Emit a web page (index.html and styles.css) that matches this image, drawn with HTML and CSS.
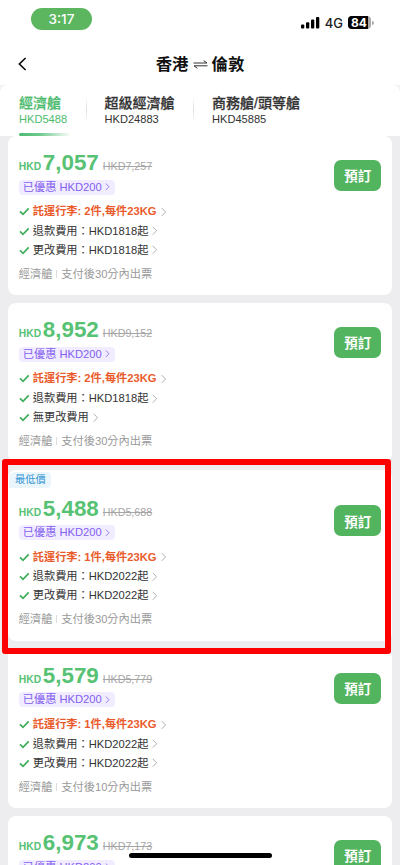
FILE: index.html
```html
<!DOCTYPE html>
<html lang="zh-Hant">
<head>
<meta charset="utf-8">
<title>香港 ⇌ 倫敦</title>
<link rel="stylesheet" href="styles.css">
</head>
<body>
<svg class="defs" width="0" height="0">
  <symbol id="check" viewBox="0 0 11 9"><path d="M1 4.4 4 7.4 9.7 1.4" fill="none" stroke="#3fae5a" stroke-width="1.7"/></symbol>
  <symbol id="chev" viewBox="0 0 6 10"><path d="M.8.7 5 5 .8 9.3" fill="none" stroke="currentColor" stroke-width="1"/></symbol>
</svg>
<div class="screen">
  <div class="status">
    <span class="clock">3:17</span>
    <div class="signals">
      <svg class="bars" width="19" height="12" viewBox="0 0 19 12"><rect x="0" y="7.6" width="3.3" height="4" rx="1"/><rect x="5" y="5.2" width="3.3" height="6.4" rx="1"/><rect x="10" y="2.6" width="3.3" height="9" rx="1"/><rect x="15" y="0" width="3.3" height="11.6" rx="1"/></svg>
      <span class="net">4G</span>
      <span class="battery"><span class="level">84</span></span><i class="cap"></i>
    </div>
  </div>
  <div class="nav">
    <svg class="back" width="9" height="14" viewBox="0 0 9 14"><path d="M7.6 1 1.4 7l6.2 6" fill="none" stroke="#111" stroke-width="1.7"/></svg>
    <h1 class="title"><span>香港</span><svg width="15" height="9" viewBox="0 0 15 9"><path d="M.5 3H14L10.6.6M14.5 5.8H1L4.4 8.3" fill="none" stroke="#333" stroke-width="1"/></svg><span>倫敦</span></h1>
  </div>
  <div class="tabwrap"><div class="tabs">
    <div class="tab tab-on"><b>經濟艙</b><span>HKD5488</span></div>
    <div class="tab tab-mid"><b>超級經濟艙</b><span>HKD24883</span></div>
    <div class="tab"><b>商務艙/頭等艙</b><span>HKD45885</span></div>
  </div></div>
  <main class="list">
    <section class="card">
      <div class="price"><small>HKD</small><strong>7,057</strong><s>HKD7,257</s></div>
      <div class="deal">已優惠 HKD200<svg><use href="#chev"/></svg></div>
      <div class="row bag"><svg class="ck"><use href="#check"/></svg>託運行李: 2件,每件23KG<svg class="cv"><use href="#chev"/></svg></div>
      <div class="row"><svg class="ck"><use href="#check"/></svg>退款費用：HKD1818起<svg class="cv"><use href="#chev"/></svg></div>
      <div class="row"><svg class="ck"><use href="#check"/></svg>更改費用：HKD1818起<svg class="cv"><use href="#chev"/></svg></div>
      <div class="foot">經濟艙<i></i>支付後30分內出票</div>
      <button class="book">預訂</button>
    </section>
    <section class="card">
      <div class="price"><small>HKD</small><strong>8,952</strong><s>HKD9,152</s></div>
      <div class="deal">已優惠 HKD200<svg><use href="#chev"/></svg></div>
      <div class="row bag"><svg class="ck"><use href="#check"/></svg>託運行李: 2件,每件23KG<svg class="cv"><use href="#chev"/></svg></div>
      <div class="row"><svg class="ck"><use href="#check"/></svg>退款費用：HKD1818起<svg class="cv"><use href="#chev"/></svg></div>
      <div class="row"><svg class="ck"><use href="#check"/></svg>無更改費用<svg class="cv"><use href="#chev"/></svg></div>
      <div class="foot">經濟艙<i></i>支付後30分內出票</div>
      <button class="book">預訂</button>
    </section>
    <section class="card lowest">
      <span class="flag">最低價</span>
      <div class="price"><small>HKD</small><strong>5,488</strong><s>HKD5,688</s></div>
      <div class="deal">已優惠 HKD200<svg><use href="#chev"/></svg></div>
      <div class="row bag"><svg class="ck"><use href="#check"/></svg>託運行李: 1件,每件23KG<svg class="cv"><use href="#chev"/></svg></div>
      <div class="row"><svg class="ck"><use href="#check"/></svg>退款費用：HKD2022起<svg class="cv"><use href="#chev"/></svg></div>
      <div class="row"><svg class="ck"><use href="#check"/></svg>更改費用：HKD2022起<svg class="cv"><use href="#chev"/></svg></div>
      <div class="foot">經濟艙<i></i>支付後30分內出票</div>
      <button class="book">預訂</button>
      <div class="marker"></div>
    </section>
    <section class="card">
      <div class="price"><small>HKD</small><strong>5,579</strong><s>HKD5,779</s></div>
      <div class="deal">已優惠 HKD200<svg><use href="#chev"/></svg></div>
      <div class="row bag"><svg class="ck"><use href="#check"/></svg>託運行李: 1件,每件23KG<svg class="cv"><use href="#chev"/></svg></div>
      <div class="row"><svg class="ck"><use href="#check"/></svg>退款費用：HKD2022起<svg class="cv"><use href="#chev"/></svg></div>
      <div class="row"><svg class="ck"><use href="#check"/></svg>更改費用：HKD2022起<svg class="cv"><use href="#chev"/></svg></div>
      <div class="foot">經濟艙<i></i>支付後10分內出票</div>
      <button class="book">預訂</button>
    </section>
    <section class="card">
      <div class="price"><small>HKD</small><strong>6,973</strong><s>HKD7,173</s></div>
      <div class="deal">已優惠 HKD200<svg><use href="#chev"/></svg></div>
      <button class="book">預訂</button>
    </section>
  </main>
  <div class="home"></div>
</div>
</body>
</html>
```
FILE: styles.css
```css
* { box-sizing: border-box; }
body { margin: 0; font-family: "Liberation Sans", "Noto Sans CJK TC", sans-serif; color: #333; }
.defs { position: absolute; }
.screen { position: relative; width: 400px; height: 865px; overflow: hidden; background: #ededf0; display: flex; flex-direction: column; }

.status { flex: none; height: 42px; background: #fff; display: flex; justify-content: space-between; align-items: flex-start; padding: 8px 26px 0 31px; }
.clock { width: 61px; height: 22px; border-radius: 11px; background: #5cb65f; color: #fff; font: 500 13.5px/22px Inter, sans-serif; text-align: center; }
.signals { display: flex; align-items: center; height: 16px; margin-top: 6.5px; }
.net { font: 500 13px/16px Inter, sans-serif; color: #222; margin: 0 5px 0 5px; }
.battery { width: 23px; height: 13px; border-radius: 4px; background: #aaa; overflow: hidden; }
.level { display: block; width: 20px; height: 13px; background: #000; color: #fff; font: 700 12px/13px Inter, sans-serif; text-align: right; padding-right: 1px; }
.cap { width: 2px; height: 4px; margin-left: 1px; border-radius: 0 2px 2px 0; background: #aaa; }

.nav { flex: none; height: 43px; background: #fff; display: flex; align-items: center; padding: 0 18px; }
.back { flex: none; margin-top: 1px; }
.title { flex: 1; margin: 1px 9px 0 0; display: flex; justify-content: center; align-items: center; gap: 4px; font-size: 16.4px; line-height: 24px; font-weight: 700; color: #111; }

.tabwrap { flex: none; background: #f3f3f4; }
.tabs { height: 51px; display: flex; background: #fff; border-radius: 8px 8px 0 0; padding: 10px 0 0 19px; }
.tab { position: relative; width: 107.5px; display: flex; flex-direction: column; white-space: nowrap; color: #333; }
.tab b { font-size: 14px; line-height: 17px; font-weight: 500; -webkit-text-stroke: .25px currentColor; }
.tab span { font-size: 11.1px; line-height: 14px; }
.tab-on { width: 85.5px; color: #4dbb6e; }
.tab-on::before { content: ""; position: absolute; left: 0; top: 38px; width: 52px; height: 3.4px; border-radius: 2px; background: linear-gradient(90deg, #4dbc73, #6fc98d 40%, #fff); z-index: 2; }
.tab-on::after, .tab-mid::after { content: ""; position: absolute; top: 2px; width: 1px; height: 26px; background: linear-gradient(#fff, #ddd, #fff); }
.tab-on::after { right: 18px; }
.tab-mid::after { right: 18px; }

.list { padding: 0 7.6px; display: flex; flex-direction: column; gap: 8px; }
.card { flex: none; position: relative; height: 159.2px; background: #fff; border-radius: 8px; padding: 14px 11px 0 11.2px; white-space: nowrap; }
.price { height: 25px; display: flex; align-items: baseline; line-height: 25px; color: #58c274; }
.price small { font-size: 10.3px; font-weight: 700; width: 24px; }
.price strong { font-size: 22.4px; letter-spacing: 0; }
.price s { font-size: 10.7px; color: #a5a5a5; margin-left: 4px; }
.deal { width: 96px; height: 15px; margin-top: 4.5px; border-radius: 4px; background: #f1ecff; color: #835ff0; font-size: 11.2px; line-height: 15px; padding-left: 4px; display: flex; align-items: center; }
.deal svg { width: 5px; height: 7.5px; margin-left: 3px; }
.row { height: 19px; display: flex; align-items: center; font-size: 11.2px; line-height: 19px; color: #333; }
.bag { height: 20px; margin-top: 7.2px; color: #ea5b2c; font-weight: 700; }
.ck { width: 11px; height: 9px; margin-right: 3px; }
.cv { width: 5.5px; height: 9.5px; margin-left: 4px; color: #aaa; }
.bag .cv { margin-left: 4.5px; height: 10px; }
.foot { margin-top: 5px; height: 18px; display: flex; align-items: center; font-size: 11.2px; line-height: 18px; color: #999; }
.foot i { width: 1px; height: 8px; background: #ddd; margin: 0 4px; }
.book { position: absolute; right: 11.2px; top: 23.6px; width: 47px; height: 31px; border: 0; border-radius: 7px; padding: 0; background: #52b45f; color: #fff; font: 700 13.5px/30px "Noto Sans CJK TC", sans-serif; }

.lowest { height: 170.6px; padding-top: 25.2px; }
.lowest .book { top: 35px; }
.flag { position: absolute; left: 1px; top: 2px; width: 42px; height: 16px; border-radius: 6px 4px 4px 0; background: #eaf5fc; color: #3596d5; font-size: 10.2px; line-height: 16px; padding-left: 6.5px; }
.marker { position: absolute; left: -5.4px; top: -11.4px; width: 388.6px; height: 195px; border: 6.5px solid #f00; border-radius: 3px; z-index: 3; }
.home { position: absolute; left: 129px; top: 853px; width: 143px; height: 4.6px; border-radius: 3px; background: #000; }
```
